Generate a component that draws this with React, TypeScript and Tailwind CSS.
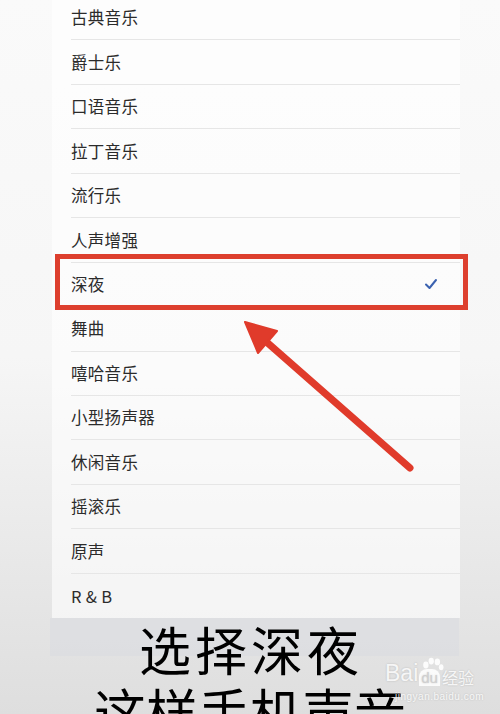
const items = [
  '古典音乐',
  '爵士乐',
  '口语音乐',
  '拉丁音乐',
  '流行乐',
  '人声增强',
  '深夜',
  '舞曲',
  '嘻哈音乐',
  '小型扬声器',
  '休闲音乐',
  '摇滚乐',
  '原声',
  'R & B',
];

const font = { fontFamily: '"Noto Sans CJK SC", "Noto Sans", sans-serif' };
const latin = { fontFamily: '"Liberation Sans", sans-serif' };

function Check() {
  return (
    <svg width="14" height="12" viewBox="0 0 14 12" className="mr-[22px]">
      <path d="M2 6.5 L5.5 10 L12 2" fill="none" stroke="#3b62b0" strokeWidth="2" strokeLinecap="round" strokeLinejoin="round" />
    </svg>
  );
}

export default function App() {
  return (
    <div
      className="relative w-[500px] h-[714px] overflow-hidden bg-linear-to-b from-[#fafafa] via-[#f6f6f6] to-[#dedede]"
      style={font}
    >
      {/* settings list */}
      <div className="ml-[52px] w-[408px] -mt-[4px] bg-white/60">
        {items.map((name, i) => (
          <div key={name} className="flex h-[44.45px] items-stretch pl-[19px]">
            <div
              className={`flex flex-1 items-center justify-between ${
                i < items.length - 1 ? 'border-b border-[#e6e6e6]' : ''
              }`}
            >
              <span className="text-[16.5px] text-[#2b2b2b] tracking-[0.3px]">{name}</span>
              {name === '深夜' && <Check />}
            </div>
          </div>
        ))}
      </div>

      {/* caption */}
      <div className="relative">
        <div className="ml-[50px] w-[409px] h-[38px] bg-[#dcdde1]/80" />
        <div className="absolute left-0 right-0 top-[0px] text-center text-[52px] leading-[62px] text-black">
          <div className="tracking-[4px] pl-[2px]">选择深夜</div>
          <div className="pl-[0px]">这样手机声音</div>
        </div>
      </div>

      {/* red highlight box */}
      <div className="absolute left-[55px] top-[254px] w-[413px] h-[56px] border-[5px] border-[#dd3f2e]" />

      {/* arrow */}
      <svg className="absolute left-0 top-0" width="500" height="714">
        <line x1="410" y1="468" x2="262" y2="338" stroke="#e03b2b" strokeWidth="7" strokeLinecap="round" />
        <polygon points="245,322 277,331 258,353" fill="#e03b2b" stroke="#e03b2b" strokeWidth="2" strokeLinejoin="round" />
      </svg>

      {/* watermark */}
      <div className="absolute left-[385px] top-[662px] text-white/85 [text-shadow:0_0_2px_rgba(0,0,0,0.2)]">
        <div className="flex items-end leading-none">
          <span className="text-[23px]" style={latin}>
            Bai
          </span>
          <span className="relative ml-[1px]">
            <svg width="26" height="26" viewBox="0 0 34 34" className="absolute -top-[13px] left-[0px]">
              <ellipse cx="9" cy="13" rx="3.5" ry="4.5" fill="white" fillOpacity="0.9" />
              <ellipse cx="16" cy="8" rx="3.5" ry="4.5" fill="white" fillOpacity="0.9" />
              <ellipse cx="24" cy="9" rx="3.5" ry="4.5" fill="white" fillOpacity="0.9" />
              <ellipse cx="29" cy="16" rx="3" ry="4" fill="white" fillOpacity="0.9" />
            </svg>
            <span className="relative rounded-t-[8px] bg-white/85 px-[2px] text-[15px] text-[#cfcfcf]" style={latin}>
              du
            </span>
          </span>
          <span className="ml-[2px] text-[16px]">经验</span>
        </div>
        <div className="mt-[4px] pl-[10px] text-[10px] tracking-[0.5px]" style={latin}>
          jingyan.baidu.com
        </div>
      </div>
    </div>
  );
}
